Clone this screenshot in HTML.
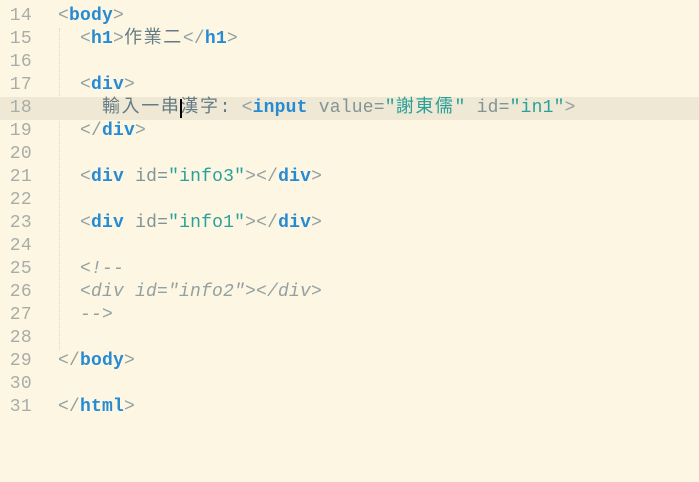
<!DOCTYPE html>
<html><head><meta charset="utf-8"><style>
html,body{margin:0;padding:0;background:#fdf6e3;width:699px;height:482px;overflow:hidden}
.ed{position:absolute;top:5px;left:0;width:699px;font-family:"Liberation Mono","Noto Sans CJK TC",monospace;font-size:18px;letter-spacing:0.2px;color:#657b83}
.l{position:relative;height:23px;line-height:23px;white-space:pre}
.n{position:absolute;left:0;width:32px;text-align:right;color:#a8ada8;letter-spacing:0.3px}
.c{position:absolute;left:58px}
.hl{background:#eee8d5}
.t{color:#268bd2;font-weight:bold}
.p{color:#93a1a1}
.a{color:#839496}
.s{color:#2aa198}
.k{font-family:"Noto Sans CJK TC",sans-serif;font-size:18px;letter-spacing:1.6px;line-height:0;vertical-align:baseline}
.cm{font-style:italic;color:#93a1a1}
.g{position:absolute;border-left:1px dotted #e0d9c4;width:0}
.cur{position:absolute;left:180px;top:2px;width:2px;height:19px;background:#000}
</style></head><body>
<div class="g" style="left:59px;top:28px;height:322px"></div>
<div class="g" style="left:81px;top:97px;height:23px"></div>
<div class="ed">
<div class="l"><span class="n">14</span><span class="c"><span class="p">&lt;</span><span class="t">body</span><span class="p">&gt;</span></span></div>
<div class="l"><span class="n">15</span><span class="c">  <span class="p">&lt;</span><span class="t">h1</span><span class="p">&gt;</span><span class="k">作業二</span><span class="p">&lt;/</span><span class="t">h1</span><span class="p">&gt;</span></span></div>
<div class="l"><span class="n">16</span></div>
<div class="l"><span class="n">17</span><span class="c">  <span class="p">&lt;</span><span class="t">div</span><span class="p">&gt;</span></span></div>
<div class="l hl"><span class="n">18</span><span class="c">    <span class="k">輸入一串漢字</span>: <span class="p">&lt;</span><span class="t">input</span> <span class="a">value=</span><span class="s">"<span class="k">謝東儒</span>"</span> <span class="a">id=</span><span class="s">"in1"</span><span class="p">&gt;</span></span><span class="cur"></span></div>
<div class="l"><span class="n">19</span><span class="c">  <span class="p">&lt;/</span><span class="t">div</span><span class="p">&gt;</span></span></div>
<div class="l"><span class="n">20</span></div>
<div class="l"><span class="n">21</span><span class="c">  <span class="p">&lt;</span><span class="t">div</span> <span class="a">id=</span><span class="s">"info3"</span><span class="p">&gt;&lt;/</span><span class="t">div</span><span class="p">&gt;</span></span></div>
<div class="l"><span class="n">22</span></div>
<div class="l"><span class="n">23</span><span class="c">  <span class="p">&lt;</span><span class="t">div</span> <span class="a">id=</span><span class="s">"info1"</span><span class="p">&gt;&lt;/</span><span class="t">div</span><span class="p">&gt;</span></span></div>
<div class="l"><span class="n">24</span></div>
<div class="l"><span class="n">25</span><span class="c cm">  &lt;!--</span></div>
<div class="l"><span class="n">26</span><span class="c cm">  &lt;div id="info2"&gt;&lt;/div&gt;</span></div>
<div class="l"><span class="n">27</span><span class="c cm">  --&gt;</span></div>
<div class="l"><span class="n">28</span></div>
<div class="l"><span class="n">29</span><span class="c"><span class="p">&lt;/</span><span class="t">body</span><span class="p">&gt;</span></span></div>
<div class="l"><span class="n">30</span></div>
<div class="l"><span class="n">31</span><span class="c"><span class="p">&lt;/</span><span class="t">html</span><span class="p">&gt;</span></span></div>
</div>
</body></html>
